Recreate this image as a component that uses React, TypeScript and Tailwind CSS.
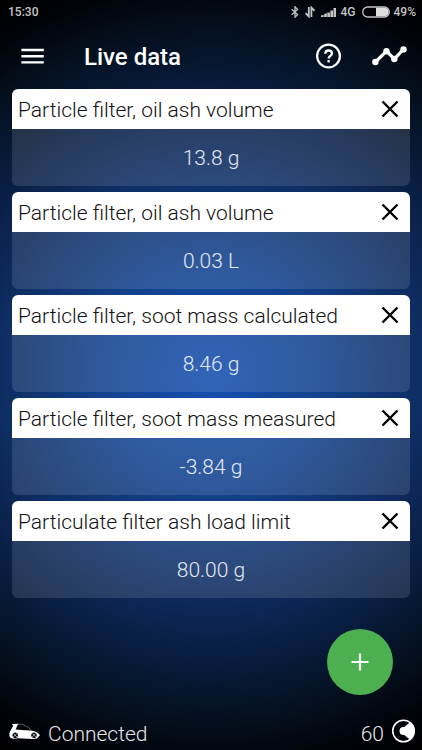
type Reading = { id: number; name: string; value: string };

const readings: Reading[] = [
  { id: 1, name: "Particle filter, oil ash volume", value: "13.8 g" },
  { id: 2, name: "Particle filter, oil ash volume", value: "0.03 L" },
  { id: 3, name: "Particle filter, soot mass calculated", value: "8.46 g" },
  { id: 4, name: "Particle filter, soot mass measured", value: "-3.84 g" },
  { id: 5, name: "Particulate filter ash load limit", value: "80.00 g" },
];

function StatusBar() {
  return (
    <div className="flex h-6 items-center justify-between pl-2 pr-1.5 text-xs font-medium text-[#c4c4c4]">
      <span>15:30</span>
      <div className="flex items-center">
        <svg className="mr-1.5 h-3 w-2" viewBox="0 0 8 12" fill="none" stroke="currentColor" strokeWidth="1.3" aria-hidden="true">
          <path d="M.6 3.3 6.6 8.6 4 11.2V.8L6.6 3.4.6 8.7" />
        </svg>
        <svg className="mr-1.5 h-3 w-2.5" viewBox="0 0 10 12" fill="none" stroke="currentColor" strokeWidth="1.8" aria-hidden="true">
          <path d="M3.8 1v9.4L.6 7M6.4 11V1.6l3.2 3.4" />
        </svg>
        <svg className="mr-1 h-3 w-4" viewBox="0 0 16 12" fill="currentColor" aria-hidden="true">
          <path d="M0 11V9.6L2.6 8.8V11zM3.1 11V8.2L5.8 7V11zM6.3 11V6.4H8.9V11zM9.4 11V4.4H12V11zM12.5 11V2H15V11z" />
        </svg>
        <span className="mr-1.5">4G</span>
        <svg className="mr-1 h-3 w-7" viewBox="0 0 28 12" aria-hidden="true">
          <rect x=".7" y="1" width="26.6" height="10" rx="5" fill="none" stroke="currentColor" strokeWidth="1.3" />
          <path d="M14 1.8h8.5a4.2 4.2 0 0 1 0 8.4H14z" fill="#dedede" />
        </svg>
        <span>49%</span>
      </div>
    </div>
  );
}

function Toolbar() {
  return (
    <header className="flex h-[65px] items-center pl-5 pr-3.5">
      <button type="button" aria-label="Open menu" className="mr-4">
        <svg className="h-6 w-6" viewBox="0 0 24 24" stroke="white" strokeWidth="2.4" aria-hidden="true">
          <path d="M1.4 5h22.4M1.4 11.2h22.4M1.4 17.4h22.4" />
        </svg>
      </button>
      <h1 className="ml-6 flex-1 text-2xl font-medium">Live data</h1>
      <button type="button" aria-label="Help" className="mr-7">
        <svg className="h-7 w-7" viewBox="0 0 28 28" fill="none" stroke="white" strokeWidth="2.3" aria-hidden="true">
          <circle cx="12.5" cy="13" r="11.4" />
          <path d="M9.3 10.7c0-2 1.3-3.2 3.3-3.2s3.3 1.2 3.3 3c0 2.2-3.3 2.6-3.3 5" />
          <path d="M12.6 17v2.4" />
        </svg>
      </button>
      <button type="button" aria-label="Show graph">
        <svg className="h-6 w-9" viewBox="0 0 36 24" fill="none" stroke="white" strokeWidth="3.2" aria-hidden="true">
          <path d="M3.4 17 14.5 6.2 22.3 14 31.5 4.4" />
          <g fill="white" stroke="none">
            <circle cx="3.4" cy="17" r="3.2" />
            <circle cx="14.5" cy="6.2" r="3.2" />
            <circle cx="22.3" cy="14" r="3.2" />
            <circle cx="31.5" cy="4.4" r="3.2" />
          </g>
        </svg>
      </button>
    </header>
  );
}

function ReadingCard({ reading }: { reading: Reading }) {
  return (
    <li className="overflow-hidden rounded-md">
      <div className="flex h-10 items-center justify-between bg-white pl-1.5 pr-2 text-[#111]">
        <h2 className="truncate pt-0.5 text-[21px] leading-10">{reading.name}</h2>
        <button type="button" aria-label={`Remove ${reading.name}`}>
          <svg className="h-6 w-6" viewBox="0 0 24 24" stroke="black" strokeWidth="2.4" aria-hidden="true">
            <path d="M4.5 4.5 19.5 19.5M19.5 4.5 4.5 19.5" />
          </svg>
        </button>
      </div>
      <p className="h-[57px] bg-white/12 text-center text-[21px] leading-[58px] text-[#e4e9f2]">{reading.value}</p>
    </li>
  );
}

function Footer() {
  return (
    <footer className="flex h-8 items-center justify-between pl-2 pr-1.5 pt-0.5 text-[21px] text-[#e6e6e6]">
      <div className="flex items-center gap-2">
        <svg className="h-6 w-8" viewBox="0 0 32 24" aria-hidden="true">
          <path d="M4 1 10.5.8 9.4 2.4 7.6 6.4 17 7.2C23 7 28 8 30.4 10.4L32 12.2 30.2 14 28.8 15.4 25 16 10 15.2 5 15.8 2 14.4C.8 11.8 1.2 9 3 6.8L5.2 2.8z" fill="white" />
          <path d="M9.5 1.2C15 .8 20 3.4 23.2 7.2" fill="none" stroke="#777" strokeWidth=".8" />
          <g fill="#05080f">
            <circle cx="7.2" cy="12.2" r="2.7" />
            <circle cx="26" cy="12.2" r="2.7" />
          </g>
          <path d="M5.4 10.4 9 14M9 10.4 5.4 14M24.2 10.4 27.8 14M27.8 10.4 24.2 14" stroke="white" strokeWidth=".6" />
        </svg>
        <span>Connected</span>
      </div>
      <div className="flex items-center gap-2">
        <span>60</span>
        <svg className="h-8 w-6" viewBox="0 0 24 32" aria-hidden="true">
          <circle cx="11.5" cy="12" r="10.8" fill="none" stroke="white" strokeWidth="1.6" />
          <path d="M12 8.3 18 3.2A11.2 11.2 0 0 1 18 20.8L12 15.7z" fill="white" />
          <circle cx="11.6" cy="12" r="4.1" fill="white" />
        </svg>
      </div>
    </footer>
  );
}

export default function App() {
  return (
    <div className="relative flex min-h-screen flex-col bg-black bg-[radial-gradient(circle_farthest-corner_at_center,#154fae_0%,#13438f_25%,#0e2d62_49%,#0a2048_62%,#04101f_80%,#010309_91%,#000000_100%)] font-[Roboto,sans-serif] font-light text-white">
      <StatusBar />
      <Toolbar />
      <main className="flex-1 px-3">
        <ul className="flex flex-col gap-1.5">
          {readings.map((reading) => (
            <ReadingCard key={reading.id} reading={reading} />
          ))}
        </ul>
      </main>
      <button
        type="button"
        aria-label="Add reading"
        className="absolute bottom-[55px] right-[29px] flex size-[66px] items-center justify-center rounded-full bg-[#4caf50]"
      >
        <svg className="h-6 w-6" viewBox="0 0 24 24" stroke="white" strokeWidth="2.2" aria-hidden="true">
          <path d="M12 3.5v17M3.5 12h17" />
        </svg>
      </button>
      <Footer />
    </div>
  );
}
